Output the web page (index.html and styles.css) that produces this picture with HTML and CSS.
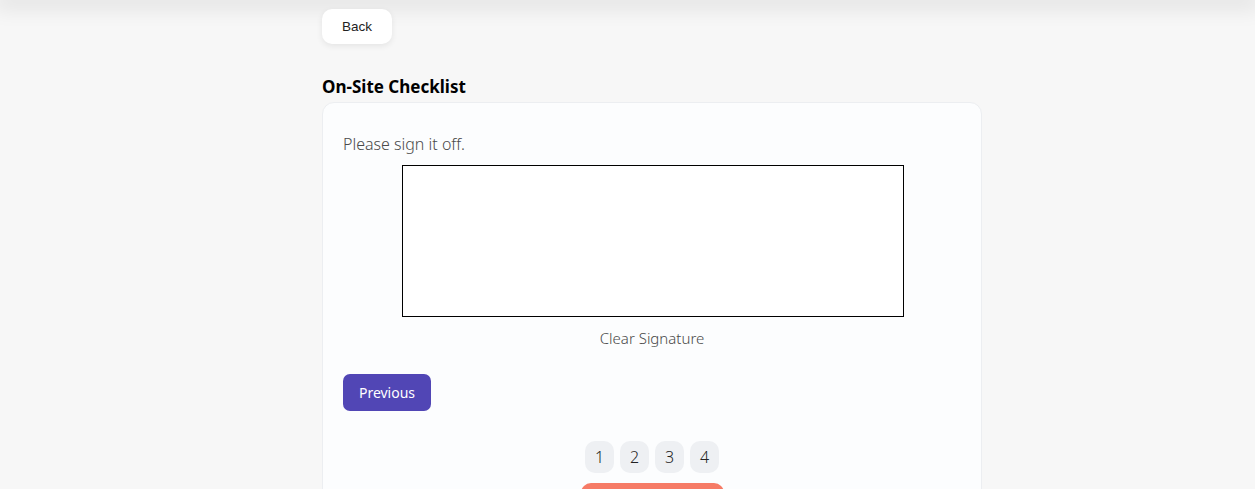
FILE: index.html
```html
<!DOCTYPE html>
<html>
<head>
<meta charset="utf-8">
<link rel="stylesheet" href="styles.css">
</head>
<body>
<div class="topbar"></div>
<main class="page">
  <button class="back">Back</button>
  <h2 class="title">On-Site Checklist</h2>
  <section class="card">
    <p class="prompt">Please sign it off.</p>
    <div class="sig-wrap">
      <div class="sig-box"></div>
      <div class="clear">Clear Signature</div>
    </div>
    <div class="nav-row">
      <button class="prev">Previous</button>
    </div>
    <div class="pager">
      <span class="pg">1</span>
      <span class="pg">2</span>
      <span class="pg">3</span>
      <span class="pg">4</span>
    </div>
    <div class="submit-row">
      <button class="submit">Submit</button>
    </div>
  </section>
</main>
</body>
</html>
```
FILE: styles.css
```css
html, body {
  margin: 0;
  padding: 0;
  background: #f7f7f7;
  font-family: "Noto Sans", "Open Sans", sans-serif;
  overflow: hidden;
  height: 489px;
}
.topbar {
  height: 0;
  box-shadow: 0 0 22px 6px rgba(0,0,0,0.13);
}
.page {
  width: 660px;
  margin-left: 322px;
  padding-top: 9px;
  display: flex;
  flex-direction: column;
  align-items: flex-start;
}
.back {
  width: 70px;
  height: 35px;
  border: none;
  background: #fff;
  border-radius: 10px;
  box-shadow: 0 2px 6px rgba(0,0,0,0.08);
  font-family: "Liberation Sans", Arial, sans-serif;
  font-size: 13.5px;
  color: #222;
  padding: 0;
}
.title {
  margin: 32px 0 4px 0;
  font-size: 17px;
  line-height: 22px;
  font-weight: 700;
  color: #000;
}
.card {
  box-sizing: border-box;
  width: 660px;
  background: #fcfdfe;
  border: 1px solid #eceef1;
  border-radius: 12px;
  padding: 29px 20px 0 20px;
  display: flex;
  flex-direction: column;
}
.prompt {
  margin: 0;
  font-size: 16px;
  line-height: 24px;
  font-weight: 300;
  color: #4a4a4a;
}
.sig-wrap {
  margin-top: 9px;
  display: flex;
  flex-direction: column;
  align-items: center;
}
.sig-box {
  width: 500px;
  height: 150px;
  border: 1px solid #000;
  background: #fff;
  margin-left: 2px;
}
.clear {
  margin-top: 10px;
  font-size: 15px;
  line-height: 22px;
  font-weight: 300;
  color: #4a4a4a;
}
.nav-row {
  margin-top: 25px;
  display: flex;
}
.prev {
  width: 88px;
  height: 37px;
  border: none;
  border-radius: 7px;
  background: #5146b5;
  color: #fff;
  font-family: "Noto Sans", "Open Sans", sans-serif;
  font-size: 14px;
  font-weight: 400;
  padding: 0;
}
.pager {
  margin-top: 30px;
  display: flex;
  justify-content: center;
  gap: 6px;
  padding-left: 0;
}
.pg {
  width: 29px;
  height: 32px;
  border-radius: 10px;
  background: #eef0f3;
  display: flex;
  align-items: center;
  justify-content: center;
  font-size: 16px;
  font-weight: 300;
  color: #222;
}
.submit-row {
  margin-top: 10px;
  display: flex;
  justify-content: center;
  padding-left: 0;
}
.submit {
  width: 143px;
  height: 37px;
  border: none;
  border-radius: 10px;
  background: #f67b66;
  color: #fff;
  font-family: "Noto Sans", "Open Sans", sans-serif;
  font-size: 14px;
}
```
